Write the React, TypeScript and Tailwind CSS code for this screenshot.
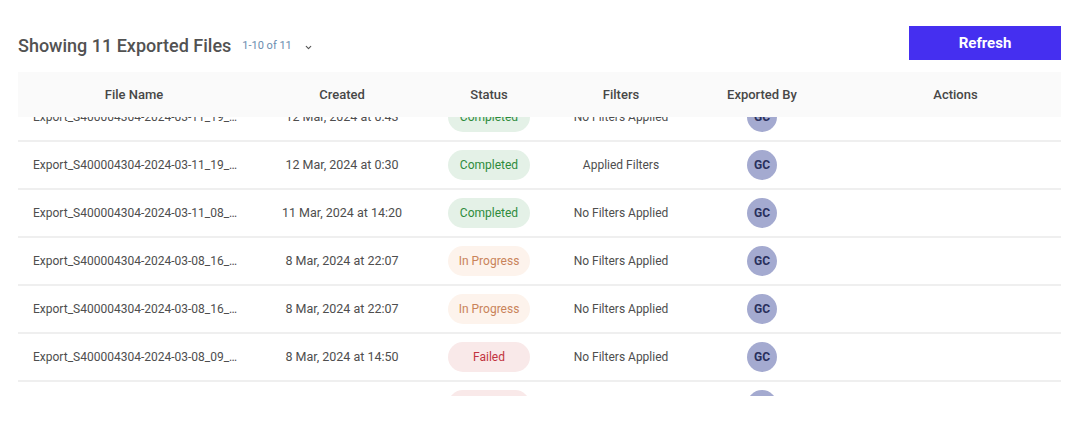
import { useLayoutEffect, useRef } from "react";

type Status = "Completed" | "In Progress" | "Failed";

const rows: { name: string; created: string; status: Status; filters: string }[] = [
  { name: "Export_S400004304-2024-03-11_19_…", created: "12 Mar, 2024 at 0:43", status: "Completed", filters: "No Filters Applied" },
  { name: "Export_S400004304-2024-03-11_19_…", created: "12 Mar, 2024 at 0:30", status: "Completed", filters: "Applied Filters" },
  { name: "Export_S400004304-2024-03-11_08_…", created: "11 Mar, 2024 at 14:20", status: "Completed", filters: "No Filters Applied" },
  { name: "Export_S400004304-2024-03-08_16_…", created: "8 Mar, 2024 at 22:07", status: "In Progress", filters: "No Filters Applied" },
  { name: "Export_S400004304-2024-03-08_16_…", created: "8 Mar, 2024 at 22:07", status: "In Progress", filters: "No Filters Applied" },
  { name: "Export_S400004304-2024-03-08_09_…", created: "8 Mar, 2024 at 14:50", status: "Failed", filters: "No Filters Applied" },
  { name: "Export_S400004304-2024-03-08_09_…", created: "8 Mar, 2024 at 14:41", status: "Failed", filters: "No Filters Applied" },
];

const badgeStyles: Record<Status, string> = {
  Completed: "bg-[#e4f1e7] text-[#2e8b3c]",
  "In Progress": "bg-[#fdf3ec] text-[#c9835a]",
  Failed: "bg-[#f9e9e9] text-[#c23440]",
};

const cols = "grid grid-cols-[232px_184px_110px_154px_128px_1fr]";

const App = () => {
  const scrollRef = useRef<HTMLDivElement>(null);

  // table is scrolled a little, first row sits under the sticky header
  useLayoutEffect(() => {
    if (scrollRef.current) scrollRef.current.scrollTop = 23;
  }, []);

  return (
    <div className="min-h-screen bg-white pl-[18px] pr-[6px] pt-[26px] font-['Roboto',sans-serif]">
      {/* Title + refresh */}
      <div className="flex items-end justify-between">
        <div className="flex items-center pb-[1px]">
          <h1 className="text-[18px] font-medium text-[#525252]">Showing 11 Exported Files</h1>
          <span className="ml-[11px] mt-[2px] text-[11px] text-[#6b8db0]">1-10 of 11</span>
          <svg className="ml-[12px] mt-[3px]" width="9" height="9" viewBox="0 0 24 24" fill="none" stroke="#555" strokeWidth="3" strokeLinecap="round" strokeLinejoin="round">
            <path d="M6 9l6 6 6-6" />
          </svg>
        </div>
        <button className="h-[34px] w-[152px] bg-[#452ff0] text-[15px] font-bold text-white">Refresh</button>
      </div>

      {/* Table */}
      <div ref={scrollRef} className="mt-[12px] h-[324px] overflow-hidden">
        <div className={`${cols} sticky top-0 z-10 h-[45px] items-center bg-[#fafafa] text-center text-[13px] font-medium text-[#474747]`}>
          <div>File Name</div>
          <div>Created</div>
          <div>Status</div>
          <div>Filters</div>
          <div>Exported By</div>
          <div className="pl-[24px]">Actions</div>
        </div>

        {rows.map((r, i) => (
          <div key={i} className={`${cols} h-[48px] items-center border-b-2 border-[#efefef] text-[12px] text-[#4e4e4e]`}>
            <div className="px-[15px] whitespace-nowrap">{r.name}</div>
            <div className="text-center text-[12.5px]">{r.created}</div>
            <div className="flex justify-center">
              <span className={`flex h-[30px] w-[82px] items-center justify-center rounded-full ${badgeStyles[r.status]}`}>
                {r.status}
              </span>
            </div>
            <div className="text-center">{r.filters}</div>
            <div className="flex justify-center">
              <span className="flex h-[30px] w-[30px] items-center justify-center rounded-full bg-[#a4aad0] text-[12px] font-bold text-[#29305c]">
                GC
              </span>
            </div>
            <div></div>
          </div>
        ))}
      </div>
    </div>
  );
};

export default App;
